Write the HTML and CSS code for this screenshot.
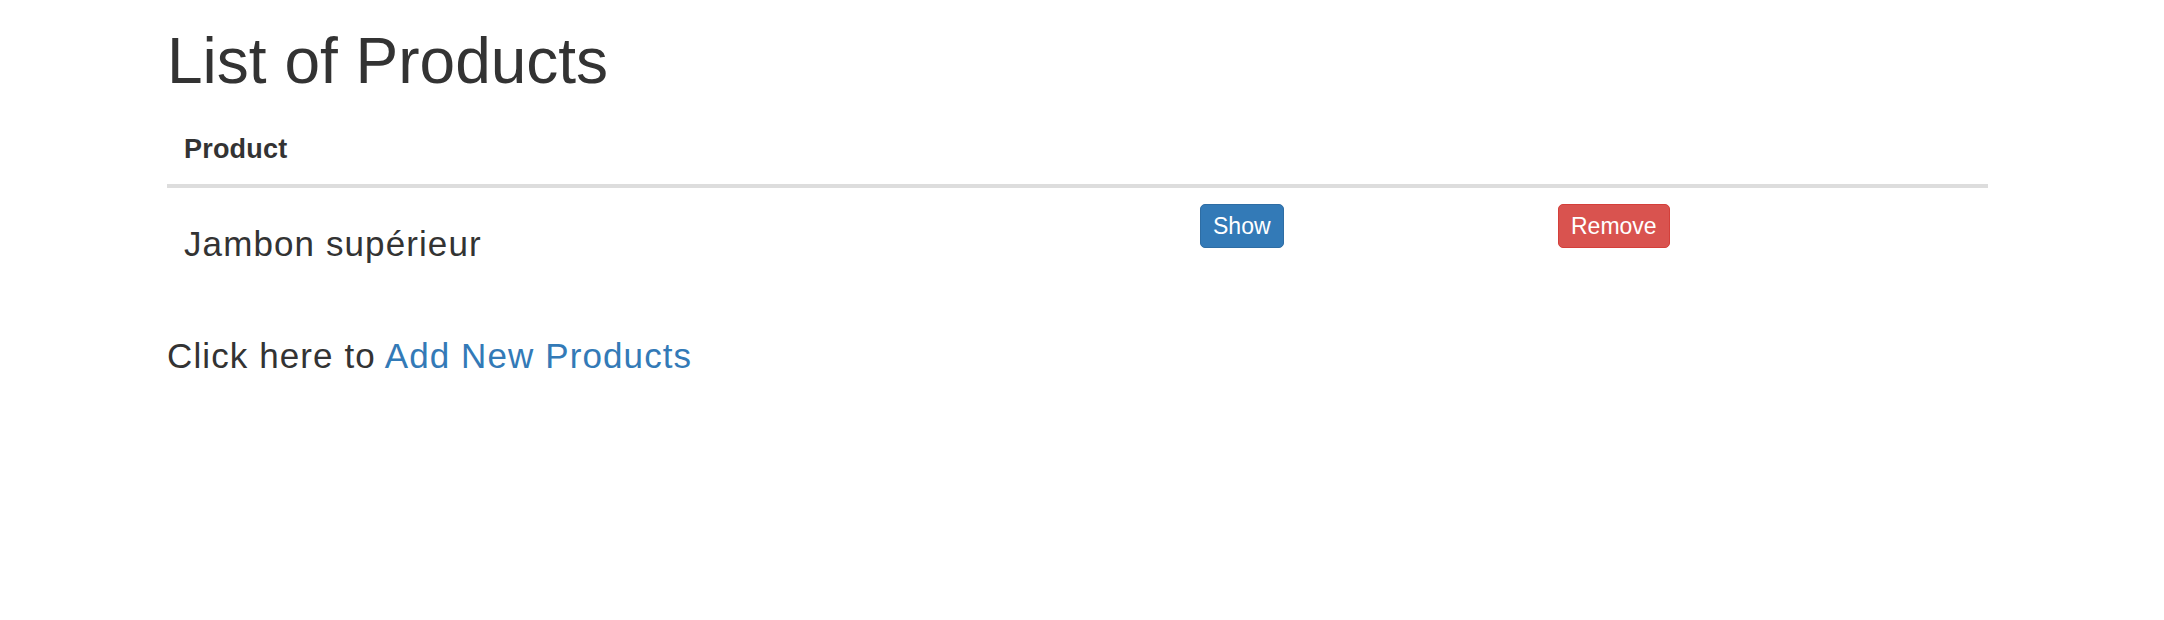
FILE: index.html
```html
<!DOCTYPE html>
<html lang="en">
<head>
<meta charset="utf-8">
<title>List of Products</title>
<link rel="stylesheet" href="styles.css">
</head>
<body>
<div class="container">
  <h1 class="title">List of Products</h1>
  <table class="products">
    <colgroup>
      <col class="col-name">
      <col class="col-show">
      <col class="col-remove">
    </colgroup>
    <thead>
      <tr>
        <th>Product</th>
        <th></th>
        <th></th>
      </tr>
    </thead>
    <tbody>
      <tr>
        <td class="name">Jambon supérieur</td>
        <td><a class="btn btn-primary" href="#">Show</a></td>
        <td><a class="btn btn-danger" href="#">Remove</a></td>
      </tr>
    </tbody>
  </table>
  <p class="add">Click here to <a class="link" href="#">Add New Products</a></p>
</div>
</body>
</html>
```

FILE: styles.css
```css
html, body {
  margin: 0;
  padding: 0;
  background: #fff;
}
body {
  font-family: "Liberation Sans", Arial, Helvetica, sans-serif;
  color: #333;
}
.container {
  margin-left: 167px;
  width: 1821px;
  padding-top: 26px;
}
.title {
  margin: 0;
  font-size: 64px;
  line-height: 70px;
  font-weight: normal;
  color: #333;
}
.products {
  margin-top: 19px;
  width: 1821px;
  border-collapse: collapse;
  table-layout: fixed;
}
.col-name { width: 1016px; }
.col-show { width: 358px; }
.col-remove { width: 447px; }
.products th {
  text-align: left;
  font-size: 27px;
  line-height: 36px;
  font-weight: bold;
  letter-spacing: 0.2px;
  padding: 16px 17px 17px;
  border-bottom: 4px solid #ddd;
  vertical-align: bottom;
}
.products td {
  padding: 16px 17px;
  vertical-align: top;
  font-size: 35px;
  line-height: 48px;
  letter-spacing: 1.1px;
}
.products td.name {
  padding-top: 32px;
}
.btn {
  display: inline-block;
  font-size: 23px;
  line-height: 26px;
  padding: 8px 12px;
  border: 1px solid transparent;
  border-radius: 5px;
  color: #fff;
  text-decoration: none;
  letter-spacing: 0;
  vertical-align: top;
}
.btn-primary {
  background: #337ab7;
  border-color: #2e6da4;
}
.btn-danger {
  background: #d9534f;
  border-color: #d43f3a;
}
.add {
  margin: 48px 0 0;
  font-size: 35px;
  line-height: 48px;
  letter-spacing: 1.1px;
}
.link {
  color: #337ab7;
  text-decoration: none;
}
```
